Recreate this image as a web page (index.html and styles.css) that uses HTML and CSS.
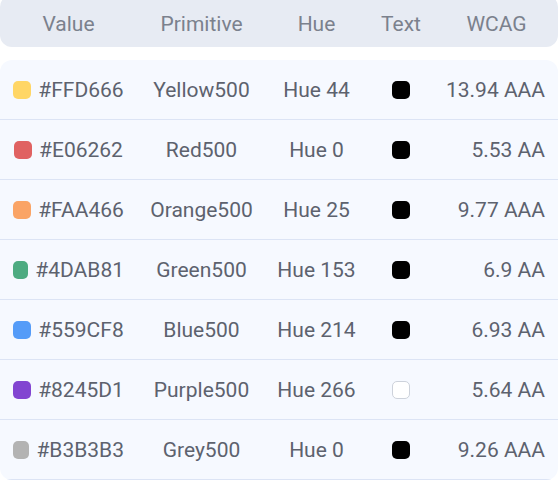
FILE: index.html
```html
<!DOCTYPE html>
<html>
<head>
<meta charset="utf-8">
<link rel="stylesheet" href="styles.css">
</head>
<body>
<div class="table">
  <div class="head row-grid">
    <div class="c">Value</div>
    <div class="c">Primitive</div>
    <div class="c">Hue</div>
    <div class="c">Text</div>
    <div class="c">WCAG</div>
  </div>
  <div class="body">
    <div class="row row-grid">
      <div class="c val"><span class="sw" style="background:#FFD666"></span>#FFD666</div>
      <div class="c">Yellow500</div>
      <div class="c">Hue 44</div>
      <div class="c"><span class="sw dark"></span></div>
      <div class="c r">13.94 AAA</div>
    </div>
    <div class="row row-grid">
      <div class="c val"><span class="sw" style="background:#E06262"></span>#E06262</div>
      <div class="c">Red500</div>
      <div class="c">Hue 0</div>
      <div class="c"><span class="sw dark"></span></div>
      <div class="c r">5.53 AA</div>
    </div>
    <div class="row row-grid">
      <div class="c val"><span class="sw" style="background:#FAA466"></span>#FAA466</div>
      <div class="c">Orange500</div>
      <div class="c">Hue 25</div>
      <div class="c"><span class="sw dark"></span></div>
      <div class="c r">9.77 AAA</div>
    </div>
    <div class="row row-grid">
      <div class="c val"><span class="sw" style="background:#4DAB81"></span>#4DAB81</div>
      <div class="c">Green500</div>
      <div class="c">Hue 153</div>
      <div class="c"><span class="sw dark"></span></div>
      <div class="c r">6.9 AA</div>
    </div>
    <div class="row row-grid">
      <div class="c val"><span class="sw" style="background:#559CF8"></span>#559CF8</div>
      <div class="c">Blue500</div>
      <div class="c">Hue 214</div>
      <div class="c"><span class="sw dark"></span></div>
      <div class="c r">6.93 AA</div>
    </div>
    <div class="row row-grid">
      <div class="c val"><span class="sw" style="background:#8245D1"></span>#8245D1</div>
      <div class="c">Purple500</div>
      <div class="c">Hue 266</div>
      <div class="c"><span class="sw light"></span></div>
      <div class="c r">5.64 AA</div>
    </div>
    <div class="row row-grid">
      <div class="c val"><span class="sw" style="background:#B3B3B3"></span>#B3B3B3</div>
      <div class="c">Grey500</div>
      <div class="c">Hue 0</div>
      <div class="c"><span class="sw dark"></span></div>
      <div class="c r">9.26 AAA</div>
    </div>
  </div>
</div>
</body>
</html>
```
FILE: styles.css
```css
html, body {
  margin: 0;
  padding: 0;
  background: #ffffff;
}
body {
  font-family: Roboto, "Liberation Sans", sans-serif;
  font-size: 21px;
  color: #5d626e;
  overflow: hidden;
}
.table {
  width: 558px;
}
.row-grid {
  display: grid;
  grid-template-columns: 111px 155px 75px 94px 97px;
  padding: 0 13px;
  align-items: center;
}
.head {
  margin-top: -5px;
  padding-top: 5px;
  height: 47px;
  background: #e7ebf3;
  border-radius: 12px;
  color: #7b818d;
}
.c {
  display: flex;
  align-items: center;
  justify-content: center;
  white-space: nowrap;
}
.c.r {
  justify-content: flex-end;
}
.val {
  gap: 7px;
}
.body {
  margin-top: 13px;
  background: #f6f9ff;
  border-radius: 12px;
  overflow: hidden;
}
.row {
  height: 59px;
  border-bottom: 1px solid #dce4f5;
}
.sw {
  display: inline-block;
  width: 18px;
  height: 18px;
  border-radius: 5px;
  box-sizing: border-box;
}
.sw.dark {
  background: #000000;
}
.sw.light {
  background: #ffffff;
  border: 1px solid #cdd2db;
}
```
